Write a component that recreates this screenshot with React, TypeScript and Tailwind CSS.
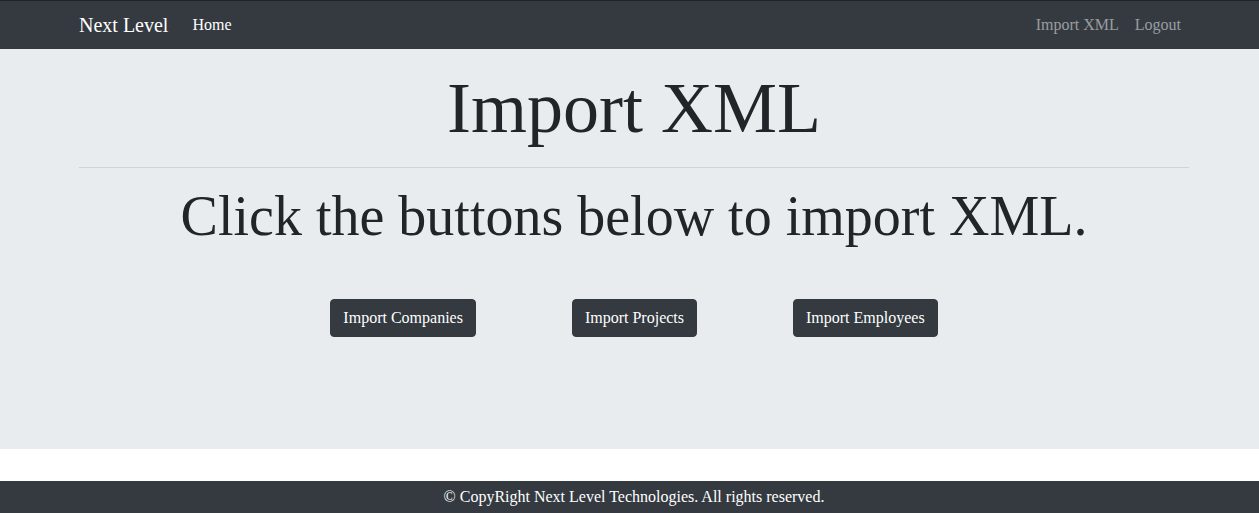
import React from 'react';

const serif = "font-['Liberation_Serif','Times_New_Roman',serif]";

function NavBar() {
  return (
    <nav className="bg-[#343a40] border-t border-[#1f2326] h-[49px]">
      <div className="ml-[79px] w-[1110px] h-full flex items-center justify-between">
        <div className="flex items-center">
          <a href="#" className="text-white text-[20px] leading-[30px] mr-4">Next Level</a>
          <a href="#" className="text-white text-base leading-6 px-2">Home</a>
        </div>
        <div className="flex items-center">
          <a href="#" className="text-white/50 text-base leading-6 px-2">Import XML</a>
          <a href="#" className="text-white/50 text-base leading-6 px-2">Logout</a>
        </div>
      </div>
    </nav>
  );
}

function ImportButton({ label }: { label: string }) {
  return (
    <button className="bg-[#343a40] text-white text-base leading-6 px-3 py-1.5 border border-[#343a40] rounded">
      {label}
    </button>
  );
}

export default function App() {
  return (
    <div className={`${serif} min-h-[513px] bg-white text-[#212529]`}>
      <NavBar />
      <section className="bg-[#e9ecef] h-[400px] pt-[16px]">
        <div className="ml-[79px] w-[1110px] text-center">
          <h1 className="text-[72px] leading-[1.2] font-normal">Import XML</h1>
          <hr className="mt-4 border-0 border-t border-black/10" />
          <p className="mt-[15px] text-[56px] leading-[1.2]">Click the buttons below to import XML.</p>
          <div className="mt-[48px] flex justify-center gap-[96px]">
            <ImportButton label="Import Companies" />
            <ImportButton label="Import Projects" />
            <ImportButton label="Import Employees" />
          </div>
        </div>
      </section>
      <div className="h-[32px]" />
      <footer className="bg-[#343a40] h-[32px] flex items-center">
        <div className="ml-[79px] w-[1110px] text-center text-white text-base leading-6">
          © CopyRight Next Level Technologies. All rights reserved.
        </div>
      </footer>
    </div>
  );
}
